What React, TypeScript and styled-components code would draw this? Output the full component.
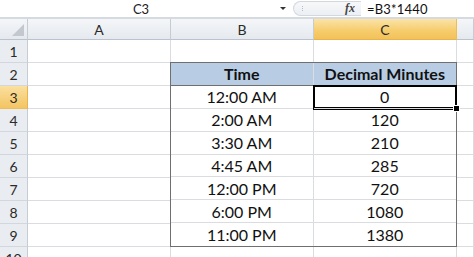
import React from "react";
import styled, { createGlobalStyle, css } from "styled-components";

const GlobalStyle = createGlobalStyle`
  html, body {
    margin: 0;
    padding: 0;
    background: #ffffff;
    overflow: hidden;
  }
  body {
    font-family: Lato, "Liberation Sans", Arial, sans-serif;
    color: #111;
  }
`;

const Screen = styled.div`
  width: 474px;
  height: 257px;
  overflow: hidden;
  background: #fff;
`;

const FormulaBar = styled.div`
  height: 17px;
  display: flex;
  align-items: center;
  background: #fff;
  border-bottom: 2px solid #d5dae1;
  font-size: 13px;
`;

const NameBox = styled.div`
  width: 278px;
  text-align: center;
  color: #222;
  padding-left: 2px;
`;

const Caret = styled.span`
  width: 0;
  height: 0;
  border-left: 3px solid transparent;
  border-right: 3px solid transparent;
  border-top: 3px solid #333;
  margin-right: 7px;
`;

const Capsule = styled.div`
  width: 68px;
  height: 15px;
  border: 1px solid #d3d8df;
  border-right: none;
  border-radius: 8px 0 0 8px;
  background: linear-gradient(#f7f8fa, #eceff3);
  display: flex;
  align-items: center;
  justify-content: space-between;
  padding: 0 6px 0 6px;
  box-sizing: border-box;
`;

const Grip = styled.span`
  width: 3px;
  height: 5px;
  border-left: 1px dotted #b5bcc6;
  margin-left: 2px;
`;

const Fx = styled.span`
  font-family: "Liberation Serif", serif;
  font-style: italic;
  font-weight: bold;
  font-size: 12px;
  color: #444;
`;

const FormulaText = styled.div`
  padding-left: 6px;
  color: #111;
  letter-spacing: 0.2px;
`;

const Sheet = styled.div`
  display: grid;
  grid-template-columns: 28px 143px 143px 143px 1fr;
  grid-template-rows: 21px repeat(10, 23px);
`;

const cellBase = css`
  box-sizing: border-box;
  display: flex;
  align-items: center;
  justify-content: center;
  border-right: 1px solid #dadcdf;
  border-bottom: 1px solid #dadcdf;
`;

const ColHead = styled.div<{ $active?: boolean }>`
  ${cellBase};
  font-size: 14px;
  color: #2a2a2a;
  background: ${(p) =>
    p.$active
      ? "linear-gradient(#fbe3a8, #f6cc6b 60%, #f2c15a)"
      : "linear-gradient(#f4f6f9, #e5e9ee)"};
  border-right-color: ${(p) => (p.$active ? "#efbd55" : "#c6ccd4")};
  border-bottom-color: ${(p) => (p.$active ? "#e8b34a" : "#b9c3cf")};
`;

const Corner = styled.div`
  ${cellBase};
  position: relative;
  background: linear-gradient(#f4f6f9, #e5e9ee);
  border-right-color: #c6ccd4;
  border-bottom-color: #b9c3cf;
  &::after {
    content: "";
    position: absolute;
    right: 3px;
    bottom: 3px;
    width: 0;
    height: 0;
    border-left: 12px solid transparent;
    border-bottom: 12px solid #c3c8cf;
  }
`;

const RowHead = styled.div<{ $active?: boolean }>`
  ${cellBase};
  font-size: 14px;
  color: #2a2a2a;
  background: ${(p) =>
    p.$active ? "linear-gradient(#fbe0a0, #f3c462)" : "#e9ecf0"};
  border-right-color: ${(p) => (p.$active ? "#e8b34a" : "#c6ccd4")};
  border-bottom-color: ${(p) => (p.$active ? "#efbd55" : "#d2d7dd")};
`;

const Cell = styled.div`
  ${cellBase};
`;

const Table = styled.div`
  grid-column: 3 / 5;
  grid-row: 3 / 11;
  margin: -1px 0 0 -1px;
  display: grid;
  grid-template-columns: 1fr 1fr;
  grid-template-rows: repeat(8, 1fr);
  border: 1px solid #6f6f6f;
  background: #fff;
  font-size: 16px;
`;

const TCell = styled.div<{ $head?: boolean; $lastCol?: boolean; $lastRow?: boolean; $selected?: boolean }>`
  box-sizing: border-box;
  position: relative;
  display: flex;
  align-items: center;
  justify-content: center;
  color: #111;
  border-right: ${(p) => (p.$lastCol ? "none" : "1px solid #dadcdf")};
  border-bottom: ${(p) =>
    p.$lastRow ? "none" : p.$head ? "1px solid #6f6f6f" : "1px solid #dadcdf"};
  ${(p) =>
    p.$head &&
    css`
      background: #b8cce4;
      font-weight: bold;
    `}
  ${(p) =>
    p.$selected &&
    css`
      box-shadow: 0 0 0 1px #000, inset 0 0 0 1px #000;
      z-index: 1;
      &::after {
        content: "";
        position: absolute;
        right: -4px;
        bottom: -4px;
        width: 5px;
        height: 5px;
        background: #000;
        border: 1px solid #fff;
      }
    `}
`;

const rows: [string, string][] = [
  ["12:00 AM", "0"],
  ["2:00 AM", "120"],
  ["3:30 AM", "210"],
  ["4:45 AM", "285"],
  ["12:00 PM", "720"],
  ["6:00 PM", "1080"],
  ["11:00 PM", "1380"],
];

const App: React.FC = () => (
  <Screen>
    <GlobalStyle />
    <FormulaBar>
      <NameBox>C3</NameBox>
      <Caret />
      <Capsule>
        <Grip />
        <Fx>fx</Fx>
      </Capsule>
      <FormulaText>=B3*1440</FormulaText>
    </FormulaBar>
    <Sheet>
      <Corner />
      <ColHead>A</ColHead>
      <ColHead>B</ColHead>
      <ColHead $active>C</ColHead>
      <ColHead />
      {Array.from({ length: 10 }, (_, i) => (
        <React.Fragment key={i}>
          <RowHead $active={i === 2} style={{ gridRow: i + 2, gridColumn: 1 }}>
            {i + 1}
          </RowHead>
          <Cell style={{ gridRow: i + 2, gridColumn: 2 }} />
          {(i === 0 || i === 9) && (
            <>
              <Cell style={{ gridRow: i + 2, gridColumn: 3 }} />
              <Cell style={{ gridRow: i + 2, gridColumn: 4 }} />
            </>
          )}
          <Cell style={{ gridRow: i + 2, gridColumn: 5 }} />
        </React.Fragment>
      ))}
      <Table>
        <TCell $head>Time</TCell>
        <TCell $head $lastCol>
          Decimal Minutes
        </TCell>
        {rows.map(([t, m], i) => (
          <React.Fragment key={t}>
            <TCell $lastRow={i === rows.length - 1}>{t}</TCell>
            <TCell $lastCol $lastRow={i === rows.length - 1} $selected={i === 0}>
              {m}
            </TCell>
          </React.Fragment>
        ))}
      </Table>
    </Sheet>
  </Screen>
);

export default App;
